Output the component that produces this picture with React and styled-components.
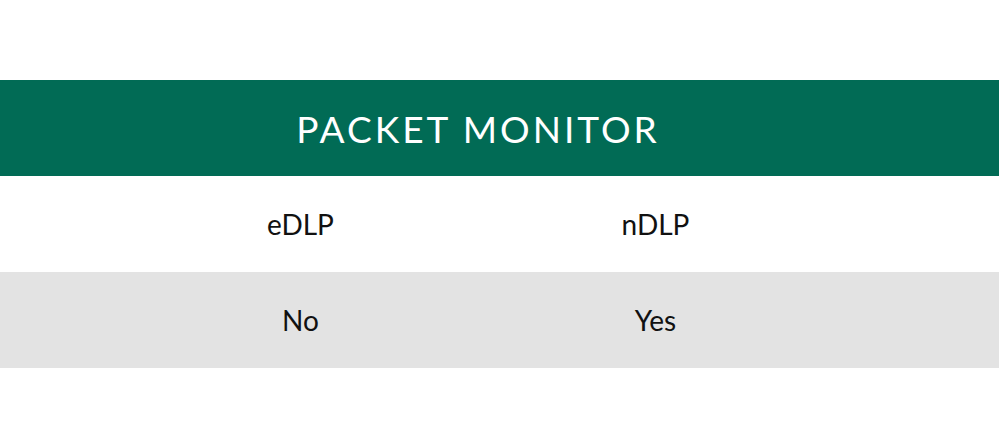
import React from "react";
import styled, { createGlobalStyle } from "styled-components";

const GlobalStyle = createGlobalStyle`
  html, body {
    margin: 0;
    padding: 0;
    background: #ffffff;
    font-family: Lato, "Open Sans", Arial, sans-serif;
  }
`;

const Page = styled.div`
  width: 999px;
  height: 437px;
  padding-top: 80px;
  box-sizing: border-box;
  overflow: hidden;
`;

const Row = styled.div`
  display: grid;
  grid-template-columns: 355px 355px;
  padding-left: 123px;
  height: 96px;
  align-items: center;
  background: ${({ $bg }) => $bg || "#ffffff"};
`;

const Title = styled.h1`
  grid-column: 1 / span 2;
  margin: 0;
  text-align: center;
  color: #ffffff;
  font-weight: 400;
  font-size: 37px;
  letter-spacing: 3px;
`;

const Cell = styled.div`
  text-align: center;
  color: #111111;
  font-size: 28px;
  font-weight: 400;
`;

const rows = [
  { bg: "#ffffff", cells: ["eDLP", "nDLP"] },
  { bg: "#e3e3e3", cells: ["No", "Yes"] },
];

export default function App() {
  return (
    <>
      <GlobalStyle />
      <Page>
        <Row $bg="#016b55">
          <Title>PACKET MONITOR</Title>
        </Row>
        {rows.map((row, i) => (
          <Row key={i} $bg={row.bg}>
            {row.cells.map((c) => (
              <Cell key={c}>{c}</Cell>
            ))}
          </Row>
        ))}
      </Page>
    </>
  );
}
